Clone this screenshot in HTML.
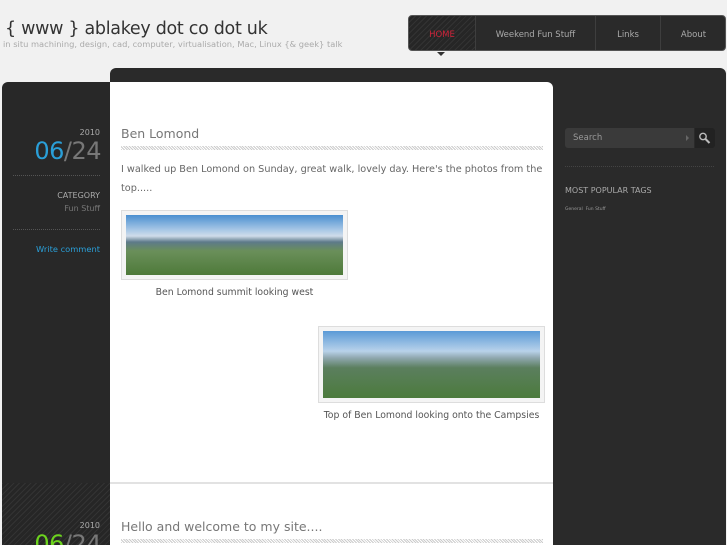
<!DOCTYPE html>
<html style="overflow:hidden"><head><meta charset="utf-8"><style>
*{margin:0;padding:0;box-sizing:border-box}
body{width:727px;height:545px;overflow:hidden;background:#f1f1f1;font-family:"DejaVu Sans","Liberation Sans",sans-serif;position:relative}
.a{position:absolute}
.title{left:5px;top:19px;font-size:17.5px;color:#333;letter-spacing:-0.3px}
.tag{left:3px;top:39px;font-size:8.3px;color:#aaa}
.nav{left:408px;top:15px;width:318px;height:36px;background:#2a2a2a;border-radius:4px;border:1px solid #555;font-size:8.5px;color:#aaa}
.nav div{position:absolute;top:0;height:34px;line-height:38px;text-align:center;border-left:1px solid #3e3e3e}
.main{left:110px;top:68px;width:616px;height:477px;background:#2a2a2a;border-radius:6px 6px 0 0}
.lcol{left:2px;top:82px;width:108px;height:463px;background:#282828;border-radius:6px 0 0 0}
.white{left:110px;top:82px;width:443px;height:463px;background:#fff;border-radius:0 6px 0 0}
.stripe{background:repeating-linear-gradient(45deg,#ccc 0 1px,#fff 1px 2px)}
.dstripe{background:repeating-linear-gradient(135deg,#333 0 1px,#262626 1px 4px)}
.t{font-size:12.5px;color:#777}
.p{font-size:9.7px;color:#666;line-height:19px}
.cap{font-size:9.3px;color:#555;text-align:center}
</style></head><body>
<div class="a title">{ www } ablakey dot co dot uk</div>
<div class="a tag">in situ machining, design, cad, computer, virtualisation, Mac, Linux {&amp; geek} talk</div>
<div class="a nav">
<div class="dstripe" style="left:0;width:66px;border:none;color:#d0233a;border-radius:4px 0 0 4px">HOME</div>
<div style="left:66px;width:120px">Weekend Fun Stuff</div>
<div style="left:186px;width:65px">Links</div>
<div style="left:251px;width:66px">About</div>
</div>
<div class="a" style="left:437px;top:52px;width:0;height:0;border-left:4px solid transparent;border-right:4px solid transparent;border-top:4px solid #333"></div>
<div class="a main"></div>
<div class="a lcol"></div>
<div class="a dstripe" style="left:2px;top:483px;width:108px;height:62px"></div>
<div class="a white"></div>
<div class="a" style="left:110px;top:482px;width:443px;height:2px;background:#e2e2e2"></div>

<div class="a" style="left:0;top:128px;width:100px;text-align:right;font-size:8px;color:#aaa">2010</div>
<div class="a" style="left:0;top:137px;width:101px;text-align:right;font-size:24px;color:#777;letter-spacing:-0.5px"><span style="color:#2a9fd8">06</span>/24</div>
<div class="a" style="left:13px;top:175px;width:87px;border-top:1px dotted #555"></div>
<div class="a" style="left:0;top:191px;width:100px;text-align:right;font-size:8px;color:#aaa">CATEGORY</div>
<div class="a" style="left:0;top:204px;width:100px;text-align:right;font-size:8px;color:#777">Fun Stuff</div>
<div class="a" style="left:13px;top:229px;width:87px;border-top:1px dotted #555"></div>
<div class="a" style="left:0;top:244px;width:100px;text-align:right;font-size:8.3px;color:#2a9fd8">Write comment</div>

<div class="a" style="left:0;top:521px;width:100px;text-align:right;font-size:8px;color:#aaa">2010</div>
<div class="a" style="left:0;top:530px;width:101px;text-align:right;font-size:24px;color:#777;letter-spacing:-0.5px"><span style="color:#6cd31e">06</span>/24</div>

<div class="a t" style="left:121px;top:126px">Ben Lomond</div>
<div class="a stripe" style="left:121px;top:146px;width:422px;height:4px"></div>
<div class="a p" style="left:121px;top:160px;width:422px">I walked up Ben Lomond on Sunday, great walk, lovely day. Here's the photos from the top.....</div>
<div class="a" style="left:121px;top:210px;width:227px;height:70px;border:1px solid #ddd;background:#f4f4f4;padding:4px">
<div style="width:100%;height:100%;background:linear-gradient(180deg,#4a8fd0 0%,#a9c8e6 25%,#cfdcea 35%,#5d7a8a 45%,#6a8f5a 60%,#4e7a3a 100%)"></div></div>
<div class="a cap" style="left:121px;top:287px;width:227px">Ben Lomond summit looking west</div>
<div class="a" style="left:318px;top:326px;width:227px;height:77px;border:1px solid #ddd;background:#f4f4f4;padding:4px">
<div style="width:100%;height:100%;background:linear-gradient(180deg,#5a9ad6 0%,#b8d2ea 30%,#90a8b0 40%,#5b7f5e 55%,#4c7b3d 100%)"></div></div>
<div class="a cap" style="left:312px;top:410px;width:239px">Top of Ben Lomond looking onto the Campsies</div>

<div class="a t" style="left:121px;top:519px">Hello and welcome to my site....</div>
<div class="a stripe" style="left:121px;top:539px;width:422px;height:4px"></div>

<div class="a" style="left:565px;top:128px;width:129px;height:20px;background:#3a3a3a;border-radius:3px 0 0 3px;font-size:8.5px;color:#999;padding:5px 8px">Search</div>
<div class="a" style="left:686px;top:135px;width:0;height:0;border-top:3px solid transparent;border-bottom:3px solid transparent;border-left:3px solid #666"></div>
<div class="a" style="left:695px;top:128px;width:20px;height:20px;background:#222;border-radius:0 3px 3px 0">
<svg width="20" height="20"><circle cx="8" cy="8.5" r="3.2" fill="none" stroke="#bbb" stroke-width="1.4"/><path d="M10.5 11 L14.5 15" stroke="#bbb" stroke-width="2"/></svg></div>
<div class="a" style="left:565px;top:166px;width:149px;border-top:1px dotted #444"></div>
<div class="a" style="left:565px;top:186px;font-size:8px;color:#aaa">MOST POPULAR TAGS</div>
<div class="a" style="left:565px;top:207px;font-size:4.5px;color:#999">General &nbsp;Fun Stuff</div>
</body></html>
